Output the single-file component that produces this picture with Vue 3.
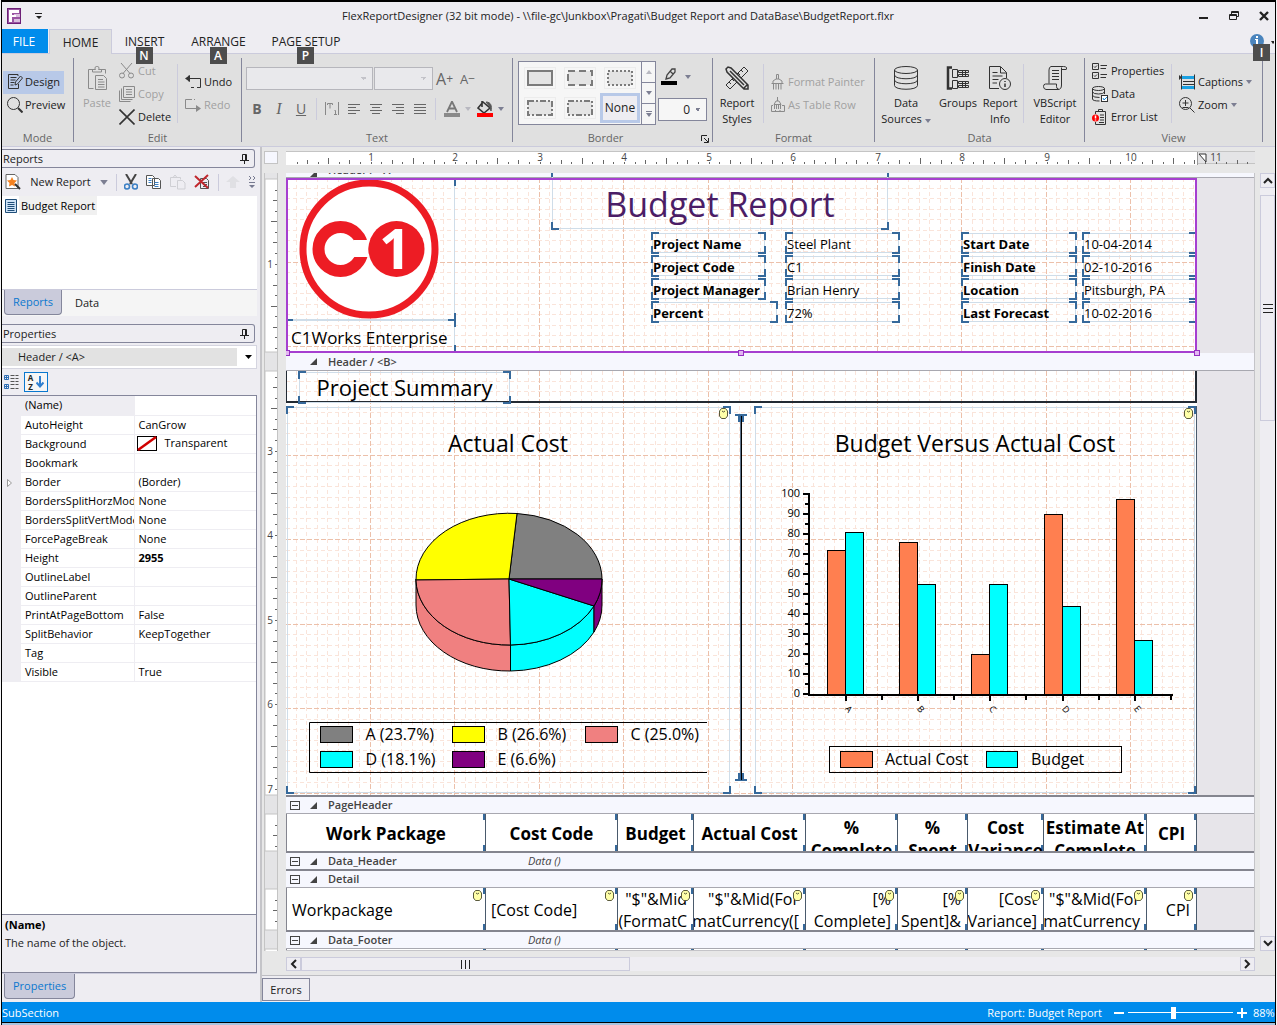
<template>
  <div class="window">
    <header class="titlebar">
      <svg class="app-icon" width="14" height="16" viewBox="0 0 14 16">
        <rect width="14" height="16" fill="#6d2077" />
        <rect x="1" y="1" width="12" height="14" fill="#9a55a3" />
        <rect x="7" y="6" width="6" height="3" fill="#d9bfdd" />
        <rect x="7" y="11" width="6" height="3" fill="#d9bfdd" />
        <path d="M2 2h10v3H5v2h4v2H5v5H2z" fill="#fff" />
      </svg>
      <button class="quick" aria-label="Customize">
        <svg width="8" height="6" viewBox="0 0 8 6"><path d="M0 0h7v1H0zM1 3h6L4 6z" fill="#222" /></svg>
      </button>
      <h1 class="window-title">{{ title }}</h1>
      <div class="window-buttons">
        <button aria-label="Minimize">
          <svg width="10" height="10" viewBox="0 0 10 10"><path d="M0 6h9v2H0z" fill="#222" /></svg>
        </button>
        <button aria-label="Restore">
          <svg width="10" height="10" viewBox="0 0 10 10"><path d="M2.500 3V.5h7v5H8M.5 3.500h7v5h-7zM.5 4.500h7M2.500 1.500h7" fill="none" stroke="#222" /></svg>
        </button>
        <button aria-label="Close">
          <svg width="10" height="10" viewBox="0 0 10 10"><path d="M1 1l8 8M9 1l-8 8" stroke="#222" stroke-width="2.400" /></svg>
        </button>
      </div>
    </header>

    <nav class="tabs">
      <button class="tab file">FILE</button>
      <button class="tab active">HOME</button>
      <button v-for="tab in tabs" :key="tab.name" class="tab" :class="tab.cls">
        {{ tab.name }}<span class="keytip">{{ tab.key }}</span>
      </button>
      <button class="info" aria-label="Info">
        <svg width="24" height="14" viewBox="0 0 24 14">
          <circle cx="7" cy="7" r="7" fill="#4a84bd" />
          <path d="M6 2h2v2H6zM5 5h3v6H6V6H5z" fill="#fff" />
          <path d="M21 7h5l-3 3z" fill="#222" />
        </svg>
        <span class="keytip">I</span>
      </button>
    </nav>

    <section class="ribbon">
      <div class="group g-mode">
        <div class="group-body">
          <div class="stack">
            <button class="tool on">
              <svg width="16" height="16" viewBox="0 0 16 16" class="ic"><path d="M11 2V.5H1.500v14H11.500V10M3.500 3.500h6M3.500 6h5M3.500 8.500h4M3.500 11h3M8 11l.5-3 5-6 2 2-5 6z" /></svg>Design
            </button>
            <button class="tool">
              <svg width="16" height="16" viewBox="0 0 16 16" class="ic"><circle cx="6.500" cy="6.500" r="6" /><path d="M11 11l4.500 4.500" stroke-width="2" /></svg>Preview
            </button>
          </div>
        </div>
        <div class="group-label">Mode</div>
      </div>

      <div class="group g-edit">
        <div class="group-body">
          <button class="big off w-paste">
            <svg width="24" height="24" viewBox="0 0 24 24" class="ic"><path d="M8 3.500H3.500v19h5M16 3.500h4.500v4M7.500 6V3.500h3a2 2 0 1 1 3 0h3V6zM10.500 9.500h8l3 3v11h-11zM13 13.500h5M13 16h6.500M13 18.500h6.500M13 21h6.500" /></svg>
            <span>Paste</span>
          </button>
          <div class="stack w-cut">
            <button class="tool off">
              <svg width="16" height="16" viewBox="0 0 16 16" class="ic"><circle cx="3" cy="12.500" r="2.500" /><circle cx="12" cy="12.500" r="2.500" /><path d="M2 0l9 10.500M13 0L4 10.500" /></svg>Cut
            </button>
            <button class="tool off">
              <svg width="16" height="16" viewBox="0 0 16 16" class="ic"><path d="M4.500.5h11v11h-11zM2.500 2.500v11h11M.5 4.500v11h11M7 3.500h6M7 6h6M7 8.500h6" /></svg>Copy
            </button>
            <button class="tool">
              <svg width="16" height="16" viewBox="0 0 16 16" class="ic"><path d="M.5.5l15 15M15.500.5l-15 15" stroke-width="1.600" /></svg>Delete
            </button>
          </div>
          <i class="rule"></i>
          <div class="stack">
            <button class="tool">
              <svg width="16" height="16" viewBox="0 0 16 16" class="ic"><path d="M2 4.500h13.500v9H12M9 13.500H6M4 1.500v6" /><path d="M5 1v7L0 4.500z" class="solid" /></svg>Undo
            </button>
            <button class="tool off">
              <svg width="16" height="16" viewBox="0 0 16 16" class="ic"><path d="M7 2.500H.5v9H12M10 2.500h-1" /><path d="M11 8v7l5-3.500z" class="solid" /></svg>Redo
            </button>
          </div>
        </div>
        <div class="group-label">Edit</div>
      </div>

      <div class="group g-text">
        <div class="group-body column">
          <div class="line">
            <select class="combo font-name" aria-label="Font name" disabled></select>
            <select class="combo font-size" aria-label="Font size" disabled></select>
            <button class="glyph big-a" aria-label="Grow font">A<sup>+</sup></button>
            <button class="glyph small-a" aria-label="Shrink font">A<sup>−</sup></button>
          </div>
          <div class="line line-2">
            <button class="glyph"><b>B</b></button>
            <button class="glyph"><i class="serif">I</i></button>
            <button class="glyph"><u>U</u></button>
            <i class="rule short"></i>
            <button class="glyph" aria-label="Text direction">
              <svg width="14" height="14" viewBox="0 0 14 14" fill="none" stroke="#888"><path d="M.5 0v13M13.500 0v13M2.500 3V1.500h5V3M5 1.500v5M9.500 8.500h1v4M9 12.500h3" /></svg>
            </button>
            <button v-for="a in aligns" :key="a.name" class="glyph" :aria-label="a.name">
              <svg width="14" height="12" viewBox="0 0 14 12"><path :d="a.d" stroke="#666" /></svg>
            </button>
            <i class="rule short"></i>
            <button class="glyph" aria-label="Font color">
              <svg width="16" height="16" viewBox="0 0 16 16"><path d="M3 11L8 .5 13 11M5 7.500h6" fill="none" stroke="#777" stroke-width="1.800" /><rect y="12" width="16" height="4" fill="#8a8a8a" /></svg>
            </button>
            <svg class="caret faint" width="6" height="4" viewBox="0 0 6 4"><path d="M0 0h6L3 4z" /></svg>
            <button class="glyph" aria-label="Fill color">
              <svg width="16" height="16" viewBox="0 0 16 16"><path d="M6 1l7 6-6 5-6-5zM5 0v6" fill="#ddd" stroke="#333" stroke-width="1.600" /><path d="M9 1c5 0 6 4 5 9l-1-4z" fill="#555" stroke="#555" /><rect y="12" width="16" height="4" fill="#f00" /></svg>
            </button>
            <svg class="caret" width="6" height="4" viewBox="0 0 6 4"><path d="M0 0h6L3 4z" /></svg>
          </div>
        </div>
        <div class="group-label">Text</div>
      </div>

      <div class="group g-border">
        <div class="group-body">
          <div class="gallery">
            <div class="gallery-items">
              <button v-for="b in borders" :key="b.name" class="swatch" :aria-label="b.name">
                <svg width="26" height="16" viewBox="0 0 26 16"><rect x="1" y="1" width="24" height="14" fill="#e4e4e4" stroke="#7b7b7b" stroke-width="2" :stroke-dasharray="b.dash" /></svg>
              </button>
              <button class="swatch none">None</button>
            </div>
            <div class="gallery-scroll">
              <button aria-label="Scroll up"><svg class="caret faint" width="6" height="4" viewBox="0 0 6 4"><path d="M0 4h6L3 0z" /></svg></button>
              <button aria-label="Scroll down"><svg class="caret" width="6" height="4" viewBox="0 0 6 4"><path d="M0 0h6L3 4z" /></svg></button>
              <button aria-label="More borders"><svg class="caret" width="6" height="6" viewBox="0 0 6 6"><path d="M0 0h6v1H0zM0 2h6L3 6z" /></svg></button>
            </div>
          </div>
          <div class="pen-column">
            <button class="pen" aria-label="Border color">
              <svg width="16" height="17" viewBox="0 0 16 17"><path d="M5 11l1-4 5-6h3v3l-5 6zM9 3l3 3" fill="none" stroke="#444" stroke-width="1.300" /><rect y="13" width="16" height="4" /></svg>
              <svg class="caret" width="6" height="4" viewBox="0 0 6 4"><path d="M0 0h6L3 4z" /></svg>
            </button>
            <select class="combo weight" aria-label="Border width"><option>0</option></select>
          </div>
        </div>
        <div class="group-label with-launcher">Border
          <svg class="launcher" width="8" height="8" viewBox="0 0 8 8"><path d="M.5 6V.5H6M3 3l4 4M7.500 3v4.500H3" fill="none" stroke="#222" /></svg>
        </div>
      </div>

      <div class="group g-format">
        <div class="group-body">
          <button class="big w-styles">
            <svg width="24" height="24" viewBox="0 0 24 24" class="ic"><path d="M19 1l4 4L5 23l-4-4zM16 4l2 2M13 7l2 2M10 10l2 2M7 13l2 2M4 16l2 2" /><path d="M1 3l2-2 3 1 17 17v4h-4L2 6zM5 5l14 14M19 22l3-3" fill="#e0e0e0" stroke-width="1.500" /></svg>
            <span>Report<br />Styles</span>
          </button>
          <i class="rule"></i>
          <div class="stack">
            <button class="tool off">
              <svg width="14" height="16" viewBox="0 0 14 16" class="ic"><path d="M5.500 5V.5h2V5M2 9.500V7l3-2h3l3 2v2.500zM.5 9.500h12M2.500 10v5.500M5 10v5.500M7.500 10v5.500M10 10v5.500" /></svg>Format Painter
            </button>
            <button class="tool off">
              <svg width="14" height="16" viewBox="0 0 14 16" class="ic"><path d="M6.500 0v4M3 7.500L5 4h3l2 3.500zM3.500 8v4M5.500 8v4M7.500 8v4M9.500 8v4M2 8.500H.5v6h13v-6H11M4.500 13v2M9 13v2" /></svg>As Table Row
            </button>
          </div>
        </div>
        <div class="group-label">Format</div>
      </div>

      <div class="group g-data">
        <div class="group-body">
          <button class="big w-sources">
            <svg width="24" height="24" viewBox="0 0 24 24" class="ic"><ellipse cx="12" cy="4" rx="11.500" ry="3.500" /><path d="M.5 4v15.500c0 5 23 5 23 0V4M.5 9c0 5 23 5 23 0M.5 14c0 5 23 5 23 0" /></svg>
            <span>Data<br />Sources <svg class="caret" width="6" height="4" viewBox="0 0 6 4"><path d="M0 0h6L3 4z" /></svg></span>
          </button>
          <button class="big w-groups">
            <svg width="24" height="24" viewBox="0 0 24 24" class="ic"><path d="M6 1.500H2v21h4" stroke-width="2.500" /><path d="M6.500 3.500h5v8h-5zM6.500 14.500h5v8h-5zM12.500 4.500h10v2h-10zM12.500 8.500h10v2h-10zM12.500 15.500h10v2h-10zM12.500 19.500h10v2h-10zM16.500 4v6M19.500 4v6M16.500 15v6M19.500 15v6" /></svg>
            <span>Groups</span>
          </button>
          <button class="big w-info">
            <svg width="24" height="24" viewBox="0 0 24 24" class="ic"><path d="M11 22.500H1.500V.5h11l6 6V12M12.500 1v6h6M4.500 6.500h5M4.500 10h10M4.500 13.500h6M4.500 17h4.500" /><circle cx="17" cy="18" r="5.500" /><path d="M17 15v1M17 17.500V21" stroke-width="1.500" /></svg>
            <span>Report<br />Info</span>
          </button>
          <i class="rule"></i>
          <button class="big w-script">
            <svg width="24" height="24" viewBox="0 0 24 24" class="ic"><path d="M23.500 3.500V1.500q-1-1-3-1H8Q6 1 6 4v13.500M23 3.500h-4.500v-2M18.500 3v16q0 4.500-3.500 4.500H3q-2.500-.5-2.500-3t2-2.500h11v2.500q0 2.500 2 2.500M9 4.500h7M9 7.500h7M9 10.500h7M9 13.500h7" /></svg>
            <span>VBScript<br />Editor</span>
          </button>
        </div>
        <div class="group-label">Data</div>
      </div>

      <div class="group g-view">
        <div class="group-body">
          <div class="stack w-view">
            <button class="tool">
              <svg width="16" height="16" viewBox="0 0 16 16" class="ic"><path d="M.5.5h6v6h-6zM.5 9.500h6v6h-6zM2 3.500l1 1 2-2M2 12.500l1 1 2-2M8.500 2.500H15M8.500 5.500H14M8.500 11.500H15M8.500 14.500H14" /></svg>Properties
            </button>
            <button class="tool">
              <svg width="16" height="16" viewBox="0 0 16 16" class="ic"><ellipse cx="6.500" cy="2.500" rx="6" ry="2" /><path d="M.5 2.500v10.500q0 2 7 2M12.500 2.500V8M.5 6q1 2 6 2t6-2M.5 9.500q1 2 7 2" /><rect x="9.500" y="9.500" width="6" height="6" fill="#fff" /><path d="M11 12l1 2 3-3" stroke="#1b87d6" /></svg>Data
            </button>
            <button class="tool">
              <svg width="16" height="16" viewBox="0 0 16 16" class="ic"><path d="M3.500 5V2.500h10v13h-10V13M6.500 2V.5h4V2M8 6h4M8 8.500h4M8 11h4M7 13.500h5" /><circle cx="3.500" cy="9" r="3.500" fill="#f00" stroke="none" /><path d="M3.500 6.500V9.500M3.500 10.500v1" stroke="#fff" stroke-width="1.500" /></svg>Error List
            </button>
          </div>
          <i class="rule"></i>
          <div class="stack">
            <button class="tool">
              <svg width="16" height="16" viewBox="0 0 16 16" class="ic"><path d="M2.500.5v15M15.500.5v15M4 7.500h11M4 10.500h11" /><path d="M0 1v5l3-2.500z" class="solid" /><path d="M3 3.500h12M3 13.500h12" stroke="#1ba1e2" stroke-width="3" /></svg>Captions
              <svg class="caret" width="6" height="4" viewBox="0 0 6 4"><path d="M0 0h6L3 4z" /></svg>
            </button>
            <button class="tool">
              <svg width="16" height="16" viewBox="0 0 16 16" class="ic"><circle cx="6.500" cy="6.500" r="6" /><path d="M11 11l4.500 4.500M3.500 6h6M6.500 3v6M3.500 10.500h6" /></svg>Zoom
              <svg class="caret" width="6" height="4" viewBox="0 0 6 4"><path d="M0 0h6L3 4z" /></svg>
            </button>
          </div>
        </div>
        <div class="group-label">View</div>
      </div>
    </section>

    <main class="body">
      <aside class="side">
        <h2 class="panel-head">Reports <svg width="9" height="10" viewBox="0 0 9 10"><path d="M2.500 6V.5h4V6M0 6.500h9M4.500 7v3M5.500 1v5" fill="none" stroke="#222" /></svg></h2>
        <div class="panel-tools">
          <svg width="16" height="16" viewBox="0 0 16 16"><path d="M1 .5h9l3 3v11H1z" fill="#fff" stroke="#666" /><path d="M7 3l1.500 3 3.500.5-2.500 2.500.5 3.500-3-1.500-3 1.500.5-3.500L2 6.500 5.500 6z" fill="#f58220" /><path d="M10 10l5 5" stroke="#333" stroke-width="2" /></svg>
          <button class="new-report">New Report</button>
          <svg class="menu-caret" width="8" height="5" viewBox="0 0 6 4"><path d="M0 0h6L3 4z" /></svg>
          <i class="rule side-rule"></i>
          <button aria-label="Cut"><svg width="14" height="16" viewBox="0 0 14 16"><path d="M2 0l6 10M12 0L6 10" stroke="#444" stroke-width="2" /><circle cx="3" cy="12.500" r="2.500" fill="none" stroke="#3b7fc4" stroke-width="1.600" /><circle cx="11" cy="12.500" r="2.500" fill="none" stroke="#3b7fc4" stroke-width="1.600" /></svg></button>
          <button aria-label="Copy"><svg width="16" height="16" viewBox="0 0 16 16" fill="#fff" stroke="#555"><path d="M.5 1.500h6l2 2v8h-8zM6.500 4.500h6l2 2v8h-8z" /><path d="M2.500 4.500h3M2.500 6.500h3M2.500 8.500h3M8.500 8.500h4M8.500 10.500h4M8.500 12.500h4" stroke="#3b7fc4" /></svg></button>
          <button aria-label="Paste"><svg width="16" height="16" viewBox="0 0 16 16" fill="none" stroke="#cfcfd4"><path d="M6 12.500H.5v-9h10v2M3 3.500L5 1l2 2.500M7.500 6.500h5l2.500 2.500v6H7.500z" /></svg></button>
          <button aria-label="Delete"><svg width="16" height="16" viewBox="0 0 16 16"><path d="M6.500 4.500h6l2 2v8h-8zM9 8.500h4M9 10.500h4M9 12.500h4" fill="none" stroke="#555" /><path d="M1 2l13 12M14 1L1 13" stroke="#c0272d" stroke-width="2" /></svg></button>
          <i class="rule side-rule"></i>
          <button aria-label="Move up"><svg width="14" height="12" viewBox="0 0 14 12"><path d="M7 0l7 6h-4v6H4V6H0z" fill="#e0e0e4" /></svg></button>
          <svg width="8" height="12" viewBox="0 0 8 12"><path d="M1 0l2 2-2 2M5 0l2 2-2 2" fill="none" stroke="#777a90" /><path d="M1 6h6v1H1zM1 9h6l-3 3z" fill="#777a90" /></svg>
        </div>
        <ul class="report-list">
          <li>
            <svg width="12" height="14" viewBox="0 0 12 14"><path d="M.5.500h11v13H.5z" fill="#cfe3f7" stroke="#1f4e79" /><path d="M2.500 3.500h7M2.500 5.500h7M2.500 7.500h7M2.500 9.500h7M2.500 11.500h7" stroke="#1f4e79" /></svg>
            <span>Budget Report</span>
          </li>
        </ul>
        <div class="dock-tabs">
          <button class="dock-tab active">Reports</button>
          <button class="dock-tab">Data</button>
        </div>

        <h2 class="panel-head second">Properties <svg width="9" height="10" viewBox="0 0 9 10"><path d="M2.500 6V.5h4V6M0 6.500h9M4.500 7v3M5.500 1v5" fill="none" stroke="#222" /></svg></h2>
        <div class="object-picker">
          <select aria-label="Object"><option>Header / &lt;A&gt;</option></select>
          <svg width="7" height="4" viewBox="0 0 7 4"><path d="M0 0h7L3.500 4z" /></svg>
        </div>
        <div class="sort-tools">
          <button aria-label="Categorized"><svg width="15" height="15" viewBox="0 0 15 15"><path d="M.5.5h4v4h-4zM.5 9.500h4v4h-4zM1 2.500h3M2.500 1v3M1 11.500h3M2.500 10v3" fill="none" stroke="#2f6fb5" /><path d="M6.500.5h8M6.500 3.500h8M6.500 6.500h8M6.500 9.500h8M6.500 13.500h8" stroke="#555" stroke-dasharray="4 1 3 9" /></svg></button>
          <button class="on" aria-label="Alphabetical"><span>A<br />Z</span><svg width="8" height="12" viewBox="0 0 8 12"><path d="M4 0v10M.5 6.500L4 10.500l3.500-4" fill="none" stroke="#2f7fd0" stroke-width="2" /></svg></button>
        </div>
        <div class="props-area">
          <table class="props">
            <tbody>
              <tr v-for="p in properties" :key="p.name" :class="{ current: p.name === '(Name)' }">
                <td class="gutter"><svg v-if="p.expand" width="6" height="8" viewBox="0 0 6 8"><path d="M.5.500v7l4-3.500z" fill="#fff" stroke="#999" /></svg></td>
                <th>{{ p.name }}</th>
                <td :class="{ strong: p.strong }">
                  <svg v-if="p.swatch" width="20" height="15" viewBox="0 0 20 15"><rect x=".5" y=".5" width="19" height="14" fill="#fff" stroke="#000" /><path d="M1 14L19 1" stroke="#d00000" stroke-width="2.500" /></svg>{{ p.value }}
                </td>
              </tr>
            </tbody>
          </table>
        </div>
        <div class="describe">
          <strong>(Name)</strong>
          <p>The name of the object.</p>
        </div>
        <div class="dock-tabs bottom">
          <button class="dock-tab active">Properties</button>
        </div>
      </aside>

      <div class="work">
        <div class="designer">
          <div class="corner"></div>
          <svg class="ruler-h" height="13">
            <rect width="911" height="13" fill="#fff" />
            <path d="M911.500 0v13" stroke="#999" />
            <path d="M913 2h7v8z" fill="#fff" stroke="#333" />
            <path v-for="t in hTicks" :key="t.x" :d="`M${t.x} ${12 - t.len}v${t.len}`" stroke="#666" />
            <text v-for="n in 11" :key="n" :x="Math.round(n * inch)" y="9">{{ n }}</text>
          </svg>
          <svg class="ruler-v" width="14">
            <g v-for="s in vSegments" :key="s.from">
              <rect x="0" :y="s.from" width="14" :height="s.to - s.from" fill="#fff" stroke="#c4c4c4" />
              <path v-for="t in s.ticks" :key="t.y" :d="`M${12 - t.len} ${t.y}h${t.len}`" stroke="#666" />
              <text v-for="t in s.labels" :key="t.n" x="5" :y="t.y + 4">{{ t.n }}</text>
            </g>
          </svg>

          <div class="canvas">
            <div class="strip first"><i class="tri"></i><b>Header / &lt;A&gt;</b></div>
            <div class="band band-a">
              <div class="page selected">
                <svg class="grid" width="911" height="174"><path :d="grid(911, 174).minor" class="minor" /><path :d="grid(911, 174).major" class="major" /></svg>
                <svg class="logo" width="140" height="140" viewBox="0 0 140 140">
                  <circle cx="70" cy="70" r="66" fill="#fff" stroke="#ed1c24" stroke-width="7" />
                  <circle cx="41.500" cy="70" r="22" fill="none" stroke="#ed1c24" stroke-width="12" />
                  <rect x="55" y="61" width="14" height="17" fill="#fff" />
                  <circle cx="97.500" cy="70" r="28" fill="#ed1c24" />
                  <text x="96" y="90" text-anchor="middle" font-size="56" font-weight="700" fill="#fff">1</text>
                </svg>
                <div class="field f-logo"></div>
                <div class="field f-company">C1Works Enterprise</div>
                <div class="field f-title">Budget Report</div>
                <div class="facts facts-1">
                  <template v-for="f in facts1" :key="f[0]">
                    <div class="field key" :class="{ wide: f[0] === 'Percent' }">{{ f[0] }}</div>
                    <div class="field">{{ f[1] }}</div>
                  </template>
                </div>
                <div class="facts facts-2">
                  <template v-for="f in facts2" :key="f[0]">
                    <div class="field key">{{ f[0] }}</div>
                    <div class="field">{{ f[1] }}</div>
                  </template>
                </div>
                <i class="frame"></i>
                <i class="handle h-left"></i><i class="handle h-mid"></i><i class="handle h-right"></i>
              </div>
            </div>

            <div class="strip"><i class="tri"></i><b>Header / &lt;B&gt;</b></div>
            <div class="band band-b">
              <div class="page">
                <svg class="grid" width="911" height="424"><path :d="grid(911, 424).minor" class="minor" /><path :d="grid(911, 424).major" class="major" /></svg>
                <div class="summary-box"></div>
                <div class="field f-summary">Project Summary</div>
                <div class="field f-pie"><svg class="db" width="9" height="11" viewBox="0 0 9 11"><path d="M.5 3l2-2.500h4l2 2.500v5l-2 2.500h-4l-2-2.500z" fill="#ffffa8" stroke="#5a5a3c" /><path d="M3 3l1.500 1L6 3" fill="none" stroke="#5a5a3c" /></svg></div>
                <div class="field f-bars"><svg class="db" width="9" height="11" viewBox="0 0 9 11"><path d="M.5 3l2-2.500h4l2 2.500v5l-2 2.500h-4l-2-2.500z" fill="#ffffa8" stroke="#5a5a3c" /><path d="M3 3l1.500 1L6 3" fill="none" stroke="#5a5a3c" /></svg></div>
                <svg class="divider" width="14" height="368" viewBox="0 0 14 368"><path d="M1 1h12M1 366h12" stroke="#36699b" stroke-width="2" /><path d="M7 2v6M7 359v7" stroke="#36699b" stroke-width="6" /><path d="M7 8v351" stroke="#5b7088" stroke-width="2" /><path d="M7.500 2v364" stroke="#000" /></svg>

                <svg class="pie" width="440" height="386" viewBox="0 0 440 386">
                  <text x="222" y="44" text-anchor="middle" class="chart-title">Actual Cost</text>
                  <g stroke="#000" stroke-width="1">
                    <path d="M130 171v26A93 66 0 0 0 224.500 263v-26A93 66 0 0 1 130 171z" fill="#f08080" />
                    <path d="M224.500 237v26A93 66 0 0 0 308 224v-26A93 66 0 0 1 224.500 237z" fill="#0ff" />
                    <path d="M308 198v26A93 66 0 0 0 316 197v-26A93 66 0 0 1 308 198z" fill="#800080" />
                    <path d="M223 171H316A93 66 0 0 0 231 105.500z" fill="#808080" />
                    <path d="M223 171L231 105.500A93 66 0 0 0 130 172z" fill="#ff0" />
                    <path d="M223 171L130 172A93 66 0 0 0 224.500 237z" fill="#f08080" />
                    <path d="M223 171L224.500 237A93 66 0 0 0 308 198z" fill="#0ff" />
                    <path d="M223 171L308 198A93 66 0 0 0 316 171z" fill="#800080" />
                  </g>
                  <path d="M421 314.500H23.500v50H421" fill="none" stroke="#000" />
                  <g v-for="l in pieLegend" :key="l.text">
                    <rect :x="l.x" :y="l.y" width="32" height="16" :fill="l.color" stroke="#000" />
                    <text :x="l.x + 45" :y="l.y + 13" class="legend">{{ l.text }}</text>
                  </g>
                </svg>

                <svg class="bars" width="442" height="386" viewBox="0 0 442 386">
                  <text x="220" y="44" text-anchor="middle" class="chart-title">Budget Versus Actual Cost</text>
                  <g v-for="(b, i) in bars" :key="b.name" stroke="#000">
                    <rect :x="barX[i]" :y="286.5 - b.actual * 2" width="18" :height="b.actual * 2" fill="#ff7f50" />
                    <rect :x="barX[i] + 18" :y="286.5 - b.budget * 2" width="18" :height="b.budget * 2" fill="#0ff" />
                    <path :d="`M${barX[i] + 18.5} 287v6M${barX[i] + 54.5} 287v5`" stroke-width="2" />
                    <text :transform="`translate(${barX[i] + 17} 301) rotate(50)`" class="axis slant">{{ b.name }}</text>
                  </g>
                  <path d="M54 85v202h364" fill="none" stroke="#000" stroke-width="2" />
                  <g v-for="n in 11" :key="n">
                    <path :d="`M48 ${306 - n * 20}h6`" stroke="#000" stroke-width="2" />
                    <path v-if="n < 11" :d="`M50 ${296 - n * 20}h4`" stroke="#000" stroke-width="2" />
                    <text x="45" :y="309 - n * 20" text-anchor="end" class="axis">{{ (n - 1) * 10 }}</text>
                  </g>
                  <rect x="74.500" y="338.500" width="292" height="26" fill="none" stroke="#000" />
                  <rect x="85.500" y="343.500" width="32" height="16" fill="#ff7f50" stroke="#000" />
                  <text x="130" y="357" class="legend">Actual Cost</text>
                  <rect x="231.500" y="343.500" width="31" height="16" fill="#0ff" stroke="#000" />
                  <text x="276" y="357" class="legend">Budget</text>
                </svg>
              </div>
            </div>

            <div class="strip dark"><i class="minus"></i><i class="tri"></i><b>PageHeader</b></div>
            <div class="band head">
              <div class="page columns">
                <div v-for="c in columns" :key="c.head" class="cell" :class="{ tall: c.head.includes('\n') }"><span>{{ c.head }}</span></div>
              </div>
            </div>
            <div class="strip dark empty"><i class="minus"></i><i class="tri"></i><b>Data_Header</b><em>Data ()</em></div>
            <div class="strip dark"><i class="minus"></i><i class="tri"></i><b>Detail</b></div>
            <div class="band detail">
              <div class="page columns">
                <div v-for="c in columns" :key="c.head" class="cell" :class="c.align">
                  <span>{{ c.cell }}</span>
                  <svg class="db" width="9" height="11" viewBox="0 0 9 11"><path d="M.5 3l2-2.500h4l2 2.500v5l-2 2.500h-4l-2-2.500z" fill="#ffffa8" stroke="#5a5a3c" /><path d="M3 3l1.500 1L6 3" fill="none" stroke="#5a5a3c" /></svg>
                </div>
              </div>
            </div>
            <div class="strip dark"><i class="minus"></i><i class="tri"></i><b>Data_Footer</b><em>Data ()</em></div>
            <div class="band footer">
              <div class="page columns"><div v-for="c in columns" :key="c.head" class="cell"></div></div>
            </div>
          </div>

          <div class="scroll-v">
            <button aria-label="Scroll up"><svg width="10" height="7" viewBox="0 0 10 7"><path d="M1 6l4-4 4 4" /></svg></button>
            <div class="thumb"><svg width="10" height="10" viewBox="0 0 10 10"><path d="M0 1.500h10M0 5.500h10M0 9.500h10" /></svg></div>
            <button aria-label="Scroll down"><svg width="10" height="7" viewBox="0 0 10 7"><path d="M1 1l4 4 4-4" /></svg></button>
          </div>
          <div class="scroll-h">
            <button aria-label="Scroll left"><svg width="7" height="10" viewBox="0 0 7 10"><path d="M6 1L2 5l4 4" /></svg></button>
            <div class="thumb"><svg width="10" height="9" viewBox="0 0 10 9"><path d="M.5 0v9M4.500 0v9M8.500 0v9" /></svg></div>
            <button aria-label="Scroll right"><svg width="7" height="10" viewBox="0 0 7 10"><path d="M1 1l4 4-4 4" /></svg></button>
          </div>
        </div>
        <div class="errors-bar"><button class="errors">Errors</button></div>
      </div>
    </main>

    <footer class="status">
      <span class="status-left">SubSection</span>
      <span>Report: Budget Report</span>
      <button aria-label="Zoom out"><svg width="10" height="10" viewBox="0 0 10 10"><path d="M0 5h10" stroke="#fff" stroke-width="2" /></svg></button>
      <input v-model="zoom" type="range" min="10" max="190" aria-label="Zoom" />
      <button aria-label="Zoom in"><svg width="10" height="10" viewBox="0 0 10 10"><path d="M0 5h10M5 0v10" stroke="#fff" stroke-width="2" /></svg></button>
      <span class="percent">{{ zoom }}%</span>
    </footer>
    <div class="edge"></div>
  </div>
</template>

<script setup>
import { ref } from 'vue'

const title = 'FlexReportDesigner (32 bit mode) - \\\\file-gc\\Junkbox\\Pragati\\Budget Report and DataBase\\BudgetReport.flxr'
const zoom = ref(88)

const tabs = [
  { name: 'INSERT', key: 'N', cls: 't-insert' },
  { name: 'ARRANGE', key: 'A', cls: 't-arrange' },
  { name: 'PAGE SETUP', key: 'P', cls: 't-page' }
]

const aligns = [
  { name: 'Align left', d: 'M1 1.5h12M1 4.5h8M1 7.5h12M1 10.5h8' },
  { name: 'Align center', d: 'M1 1.5h12M3 4.5h8M1 7.5h12M3 10.5h8' },
  { name: 'Align right', d: 'M1 1.5h12M5 4.5h8M1 7.5h12M5 10.5h8' },
  { name: 'Justify', d: 'M1 1.5h12M1 4.5h12M1 7.5h12M1 10.5h12' }
]

const borders = [
  { name: 'Solid', dash: 'none' },
  { name: 'Dash', dash: '7 4' },
  { name: 'Dot', dash: '2 2' },
  { name: 'Dash dot', dash: '6 2 2 2' },
  { name: 'Dash dot dot', dash: '6 2 2 2 2 2' }
]

const properties = [
  { name: '(Name)', value: '' },
  { name: 'AutoHeight', value: 'CanGrow' },
  { name: 'Background', value: 'Transparent', swatch: true },
  { name: 'Bookmark', value: '' },
  { name: 'Border', value: '(Border)', expand: true },
  { name: 'BordersSplitHorzMode', value: 'None' },
  { name: 'BordersSplitVertMode', value: 'None' },
  { name: 'ForcePageBreak', value: 'None' },
  { name: 'Height', value: '2955', strong: true },
  { name: 'OutlineLabel', value: '' },
  { name: 'OutlineParent', value: '' },
  { name: 'PrintAtPageBottom', value: 'False' },
  { name: 'SplitBehavior', value: 'KeepTogether' },
  { name: 'Tag', value: '' },
  { name: 'Visible', value: 'True' }
]

const facts1 = [
  ['Project Name', 'Steel Plant'],
  ['Project Code', 'C1'],
  ['Project Manager', 'Brian Henry'],
  ['Percent', '72%']
]
const facts2 = [
  ['Start Date', '10-04-2014'],
  ['Finish Date', '02-10-2016'],
  ['Location', 'Pitsburgh, PA'],
  ['Last Forecast', '10-02-2016']
]

const pieLegend = [
  { text: 'A (23.7%)', color: '#808080', x: 34.5, y: 318.5 },
  { text: 'B (26.6%)', color: '#ffff00', x: 166.5, y: 318.5 },
  { text: 'C (25.0%)', color: '#f08080', x: 299.5, y: 318.5 },
  { text: 'D (18.1%)', color: '#00ffff', x: 34.5, y: 343.5 },
  { text: 'E (6.6%)', color: '#800080', x: 166.5, y: 343.5 }
]

const bars = [
  { name: 'A', actual: 72, budget: 81 },
  { name: 'B', actual: 76, budget: 55 },
  { name: 'C', actual: 20, budget: 55 },
  { name: 'D', actual: 90, budget: 44 },
  { name: 'E', actual: 97.5, budget: 27 }
]
const barX = [72.5, 144.5, 216.5, 289.5, 361.5]

const columns = [
  { head: 'Work Package', cell: 'Workpackage', align: 'left' },
  { head: 'Cost Code', cell: '[Cost Code]', align: 'left' },
  { head: 'Budget', cell: '"$"&Mid\n(FormatC', align: 'right' },
  { head: 'Actual Cost', cell: '"$"&Mid(For\nmatCurrency([', align: 'right' },
  { head: '%\nComplete', cell: '[%\nComplete]', align: 'right' },
  { head: '%\nSpent', cell: '[%\nSpent]&', align: 'right' },
  { head: 'Cost\nVariance', cell: '[Cost\nVariance]', align: 'right' },
  { head: 'Estimate At\nComplete', cell: '"$"&Mid(For\nmatCurrency', align: 'right' },
  { head: 'CPI', cell: 'CPI', align: 'right' }
]

// one report inch on screen at the current zoom
const inch = 84.5
const step = inch / 8

const tickLength = (n) => (n % 8 === 0 ? 2 : n % 4 === 0 ? 6 : n % 2 === 0 ? 4 : 2)

const hTicks = Array.from({ length: 91 }, (_, i) => ({
  x: Math.round((i + 1) * step) + 0.5,
  len: tickLength(i + 1)
}))

const vSegments = [
  { from: 6, to: 179, origin: 6 },
  { from: 198, to: 622, origin: 24 },
  { from: 641, to: 678, origin: 641 },
  { from: 716, to: 757, origin: 716 },
  { from: 776, to: 790, origin: 776 }
].map((s) => {
  const ticks = []
  const labels = []
  for (let n = 1; n < 60; n++) {
    const y = Math.round(s.origin + n * step)
    if (y <= s.from || y >= s.to) continue
    ticks.push({ y: y + 0.5, len: tickLength(n) })
    if (n % 8 === 0 && y < s.to - 5) labels.push({ n: n / 8, y })
  }
  return { ...s, ticks, labels }
})

function grid(w, h) {
  let minor = ''
  let major = ''
  for (let n = 1; n * step < w; n++) {
    const line = `M${Math.round(n * step) - 0.5} 0V${h}`
    if (n % 8) minor += line
    else major += line
  }
  for (let n = 1; n * step < h; n++) {
    const line = `M0 ${Math.round(n * step) - 0.5}H${w}`
    if (n % 8) minor += line
    else major += line
  }
  return { minor, major }
}
</script>

<style>
body {
  background: #f4f4f6;
}
</style>

<style scoped>
* {
  box-sizing: border-box;
}

.window {
  background: #eeedf2;
  border: 1px solid #000;
  border-bottom: 0;
  border-top-width: 2px;
  color: #222;
  display: flex;
  flex-direction: column;
  font: 11px/16px "Open Sans", "Noto Sans", sans-serif;
  height: 100vh;
  margin: 0 1px;
  overflow: hidden;
}

button {
  align-items: center;
  background: none;
  border: 0;
  color: inherit;
  display: flex;
  font: inherit;
  justify-content: center;
  padding: 0;
  white-space: nowrap;
}

h1,
h2,
p,
ul {
  font: inherit;
  margin: 0;
  padding: 0;
}

svg {
  flex: none;
}

/* title bar and tabs */
.titlebar {
  align-items: center;
  display: flex;
  height: 27px;
  padding: 0 6px 0 5px;
}

.quick {
  margin-left: 14px;
}

.window-title {
  flex: 1;
  padding-right: 6px;
  text-align: center;
}

.window-buttons {
  display: flex;
  gap: 20px;
}

.tabs {
  border-bottom: 1px solid #cbcbdc;
  display: flex;
  flex: none;
  font-size: 12px;
  height: 25px;
}

.tab {
  padding: 1px 14px 0;
  position: relative;
}

.file {
  background: #008cec;
  color: #fff;
  padding-right: 16px;
  width: 46px;
}

.active.tab {
  background: #e0e0e0;
  border: 1px solid #cbcbdc;
  border-bottom: 0;
  margin-bottom: -1px;
  margin-left: 1px;
  width: 63px;
}

.t-insert {
  width: 65px;
}

.t-arrange {
  width: 83px;
}

.t-page {
  width: 92px;
}

.keytip {
  background: #4d4d4d;
  color: #fff;
  font-weight: 600;
  height: 17px;
  left: 50%;
  line-height: 17px;
  margin-left: -9px;
  position: absolute;
  text-align: center;
  top: 18px;
  width: 17px;
  z-index: 1;
}

.info {
  margin-left: auto;
  position: relative;
  width: 26px;
}

.info .keytip {
  left: 13px;
  top: 15px;
}

/* ribbon */
.ribbon {
  background: #e0e0e0;
  border-bottom: 1px solid #cbcbdc;
  display: flex;
  flex: none;
  height: 93px;
  padding: 4px 0;
}

.group {
  border-right: 1px solid #84869b;
  display: flex;
  flex: none;
  flex-direction: column;
  padding-top: 2px;
}

.group-body {
  display: flex;
  flex: none;
  height: 69px;
}

.group-label {
  color: #666;
  flex: none;
  line-height: 18px;
  position: relative;
  text-align: center;
}

.with-launcher {
  padding-right: 14px;
}

.g-mode { width: 72px; }
.g-edit { width: 168px; }
.g-text { width: 271px; }
.g-border { width: 200px; }
.g-format { width: 162px; }
.g-data { width: 210px; }
.g-view { width: 178px; }

.stack {
  display: flex;
  flex-direction: column;
  height: 67px;
  justify-content: center;
}

.tool {
  flex: none;
  gap: 3px;
  height: 23px;
  justify-content: flex-start;
  padding: 0 2px;
}

.tool.on {
  background: #b8c9e8;
}

.g-mode .stack {
  padding-left: 1px;
  width: 62px;
}

.g-mode .tool {
  gap: 2px;
  padding-left: 4px;
}

.ic {
  fill: none;
  stroke: #333;
}

.ic .solid {
  fill: #333;
  stroke: none;
}

.off {
  color: #a0a0a0;
}

.off .ic {
  stroke: #8a8a8a;
}

.off .ic .solid {
  fill: #8a8a8a;
}

.big {
  flex: none;
  flex-direction: column;
  gap: 5px;
  justify-content: flex-start;
  padding-top: 6px;
}

.w-paste { width: 40px; }
.w-cut { width: 58px; }
.w-styles { width: 48px; }
.w-sources { width: 62px; }
.w-groups { width: 42px; }
.w-info { width: 42px; }
.w-script { width: 52px; }
.w-view { width: 79px; }

.w-paste {
  margin-left: 3px;
}

.w-view {
  margin-left: 5px;
}

.rule {
  background: #cbcbdc;
  flex: none;
  margin: 4px 5px 6px 2px;
  width: 1px;
}

.caret,
.menu-caret {
  fill: #7c7e92;
}

.caret.faint {
  fill: #b8b8c0;
}

.column {
  flex-direction: column;
}

.line {
  align-items: center;
  display: flex;
  height: 23px;
  margin: 7px 0 0 4px;
}

.line-2 {
  gap: 8px;
  margin: 7px 0 0 8px;
}

.line-2 .caret {
  margin: 0 -2px 0 -3px;
}

.combo {
  --tone: #b8b8c0;
  appearance: none;
  background:
    linear-gradient(45deg, transparent 50%, var(--tone) 50%) right 8px center / 3px 3px no-repeat,
    linear-gradient(315deg, transparent 50%, var(--tone) 50%) right 5px center / 3px 3px no-repeat,
    #eeedf2;
  border: 1px solid #a5a5ad;
  color: #222;
  font: inherit;
  height: 23px;
  margin: 0;
  padding: 0 18px 0 4px;
}

.font-name {
  margin-right: 1px;
  width: 127px;
}

.font-size {
  width: 59px;
}

.glyph {
  color: #666;
  min-width: 14px;
}

.glyph b {
  font-size: 14px;
}

.glyph u {
  font-size: 14px;
}

.glyph sup {
  font-size: 12px;
  line-height: 8px;
}

.serif {
  font-family: "Liberation Serif", serif;
  font-size: 16px;
}

.big-a {
  font-size: 16px;
  margin-left: 3px;
}

.small-a {
  font-size: 13px;
  margin-left: 7px;
}

.short {
  height: 22px;
  margin: 0;
}

.gallery {
  background: #f6f6f6;
  border: 1px solid #84869b;
  display: flex;
  flex: none;
  height: 64px;
  margin: 1px 0 0 5px;
  width: 138px;
}

.gallery-items {
  display: grid;
  flex: 1;
  grid-template-columns: 40px 40px 40px;
  grid-template-rows: 30px 30px;
  padding: 1px;
}

.swatch svg {
  outline: 1px solid #ececec;
  outline-offset: 2px;
}

.swatch.none {
  background: #eeedf2;
  border: 3px solid #b8c9e8;
  font-size: 12px;
}

.gallery-scroll {
  border-left: 1px solid #84869b;
  display: flex;
  flex-direction: column;
  width: 15px;
}

.gallery-scroll button {
  flex: 1;
}

.gallery-scroll button + button {
  border-top: 1px solid #84869b;
}

.pen-column {
  display: flex;
  flex-direction: column;
  justify-content: space-between;
  margin: 8px 0 8px 2px;
}

.pen {
  gap: 8px;
  justify-content: flex-start;
  padding-left: 3px;
}

.weight {
  --tone: #7c7e92;
  background-color: #f6f6f6;
  border-color: #84869b;
  font-size: 12px;
  padding-right: 16px;
  text-align: right;
  width: 49px;
}

.launcher {
  position: absolute;
  right: 3px;
  top: 6px;
}

/* side panels */
.body {
  display: flex;
  flex: 1;
  min-height: 0;
}

.side {
  display: flex;
  flex: none;
  flex-direction: column;
  padding-top: 2px;
  width: 255px;
}

.panel-head {
  align-items: center;
  border: 1px solid #84869b;
  border-left: 0;
  border-radius: 0 3px 3px 0;
  display: flex;
  flex: none;
  height: 19px;
  justify-content: space-between;
  margin-right: 2px;
  padding-left: 1px;
  padding-right: 5px;
}

.second {
  margin-top: 8px;
}

.panel-tools {
  align-items: center;
  display: flex;
  flex: none;
  gap: 8px;
  height: 28px;
  padding-left: 3px;
}

.new-report {
  width: 63px;
}

.side-rule {
  height: 17px;
  margin: 0 -1px 0 0;
}

.report-list {
  background: #fff;
  flex: none;
  height: 93px;
  list-style: none;
}

.report-list li {
  align-items: center;
  display: flex;
  gap: 2px;
  padding-left: 3px;
}

.report-list span {
  background: #f0f0f0;
  color: #000;
  line-height: 19px;
  padding: 0 2px;
}

.dock-tabs {
  background: #f5f5f5;
  border-top: 1px solid #cbcbdc;
  display: flex;
  flex: none;
  height: 27px;
  padding-left: 2px;
}

.dock-tab {
  height: 25px;
  padding: 0 13px;
}

.dock-tab.active {
  background: #cacbdb;
  border: 1px solid #84869b;
  border-radius: 0 0 4px 4px;
  border-top: 0;
  color: #0a78cf;
  padding: 0 8px;
}

.dock-tabs.bottom {
  background: none;
  height: 29px;
}

.object-picker {
  align-items: center;
  background: #fff;
  border: 1px solid #d5d5e0;
  border-left: 0;
  display: flex;
  flex: none;
  gap: 8px;
  height: 24px;
  margin-top: 2px;
  padding-right: 4px;
}

.object-picker select {
  appearance: none;
  background: #e2e2e2;
  border: 0;
  color: #222;
  flex: 1;
  font: inherit;
  height: 18px;
  padding: 0 16px;
}

.sort-tools {
  align-items: center;
  display: flex;
  flex: none;
  gap: 5px;
  height: 26px;
  padding-left: 2px;
}

.sort-tools .on {
  background: #f6f6f6;
  border: 1px solid #0a78cf;
  font-size: 8px;
  font-weight: 700;
  gap: 3px;
  height: 20px;
  line-height: 9px;
  width: 24px;
}

.props-area {
  background: #fff;
  border: 1px solid #84869b;
  border-left: 0;
  flex: 1;
  overflow: hidden;
}

.props {
  border-collapse: collapse;
  color: #000;
  line-height: 14px;
  table-layout: fixed;
  width: 100%;
}

.props td,
.props th {
  border-bottom: 1px solid #eeedf2;
  font-weight: 400;
  height: 19px;
  overflow: hidden;
  padding: 0 4px;
  text-align: left;
  white-space: nowrap;
}

.props .gutter {
  background: #eeedf2;
  padding: 0 7px;
  width: 19px;
}

.props th {
  border-right: 1px solid #eeedf2;
  padding: 0 0 0 4px;
  width: 113px;
}

.props .current th {
  background: #eeedf2;
}

.props .strong {
  font-weight: 700;
}

.props td svg {
  display: inline-block;
  margin-left: -2px;
  margin-right: 8px;
  vertical-align: middle;
}

.describe {
  border: 1px solid #84869b;
  border-left: 0;
  border-top: 0;
  flex: none;
  height: 58px;
  line-height: 18px;
  padding: 1px 3px;
}

.describe strong {
  color: #000;
}

/* designer */
.work {
  border-left: 2px solid #c4c4c8;
  display: flex;
  flex: 1;
  flex-direction: column;
  margin-left: 3px;
  min-width: 0;
}

.designer {
  background: #e7e7e7;
  border-bottom: 1px solid #bdbdc2;
  display: grid;
  flex: 1;
  gap: 0;
  grid-template-columns: 14px 8px 1fr 5px 15px;
  grid-template-rows: 13px 9px 1fr 6px 14px;
  min-height: 0;
  padding: 4px 0 4px 2px;
}

.corner {
  background: #f6f7fe;
  border: 1px solid #c4c4c4;
}

.ruler-h {
  background: #e4e4e6;
  border-bottom: 1px solid #c4c4c4;
  border-top: 1px solid #c4c4c4;
  grid-column: 3;
  overflow: visible;
  width: 100%;
}

.ruler-h text,
.ruler-v text {
  fill: #444;
  font-size: 10px;
  text-anchor: middle;
}

.ruler-v {
  background: #e4e4e6;
  border: solid #c4c4c4;
  border-width: 0 1px;
  grid-column: 1;
  grid-row: 3;
  height: 100%;
}

.canvas {
  background: #e7e5ea;
  border: 1px solid #c4c4c8;
  border-left: 0;
  border-top: 0;
  display: flex;
  flex-direction: column;
  grid-column: 3;
  grid-row: 3;
  min-width: 0;
  overflow: hidden;
}

.strip {
  align-items: center;
  background: #f6f7fe;
  border-bottom: 1px solid #a8a8b0;
  color: #444;
  display: flex;
  flex: none;
  height: 18px;
  line-height: 14px;
  padding-left: 4px;
}

.strip b {
  font-weight: 600;
  margin-left: 11px;
  width: 200px;
}

.strip .tri:first-child {
  margin-left: 20px;
}

.strip.dark {
  border-top: 2px solid #84858f;
  height: 19px;
}

.strip.empty {
  border-bottom: 0;
  height: 18px;
}

.strip.first {
  align-items: flex-end;
  height: 5px;
  overflow: hidden;
}

.tri {
  border-bottom: 7px solid #444;
  border-left: 7px solid transparent;
}

.minus {
  background: linear-gradient(#444 0 0) no-repeat center / 6px 1px;
  border: 1px solid #444;
  height: 9px;
  margin-right: 10px;
  width: 10px;
}

.band {
  flex: none;
}

.page {
  background: #fff;
  height: 100%;
  position: relative;
  width: 911px;
}

.band-a {
  height: 175px;
}

.band-b {
  height: 424px;
}

.selected {
  z-index: 1;
}

.frame {
  border: 2px solid #a63fd0;
  inset: 0;
  position: absolute;
}

.handle {
  background: #e3b6f2;
  border: 1px solid #9430c0;
  bottom: -3px;
  height: 6px;
  position: absolute;
  width: 6px;
}

.h-left { left: -2px; }
.h-mid { left: 452px; }
.h-right { right: -3px; }

.grid {
  left: 0;
  position: absolute;
  top: 0;
}

.minor {
  stroke: #fae4da;
  stroke-dasharray: 4 3;
}

.major {
  stroke: #ecc0aa;
  stroke-dasharray: 5 2;
}

/* a report field: faint frame with four corner marks */
.field {
  --c: linear-gradient(#36699b 0 0);
  --f: linear-gradient(#cfdde9 0 0);
  background:
    var(--c) left top / 8px 2px,
    var(--c) left top / 2px 8px,
    var(--c) right top / 8px 2px,
    var(--c) right top / 2px 8px,
    var(--c) left bottom / 8px 2px,
    var(--c) left bottom / 2px 8px,
    var(--c) right bottom / 8px 2px,
    var(--c) right bottom / 2px 8px,
    var(--f) left top 1px / 100% 1px,
    var(--f) left bottom 1px / 100% 1px,
    var(--f) left 1px top / 1px 100%,
    var(--f) right 1px top / 1px 100%;
  background-repeat: no-repeat;
  color: #000;
  white-space: nowrap;
}

.f-logo,
.f-company,
.f-title,
.f-summary,
.f-pie,
.f-bars,
.logo,
.divider,
.pie,
.bars,
.facts {
  position: absolute;
}

.logo {
  left: 13px;
  top: 1px;
}

.f-logo {
  height: 143px;
  left: -1px;
  top: 0;
  width: 171px;
}

.f-company {
  font-size: 17px;
  height: 34px;
  left: -1px;
  line-height: 38px;
  padding-left: 6px;
  top: 141px;
  width: 171px;
}

.f-title {
  color: #4b1d66;
  font-size: 34px;
  height: 61px;
  left: 265px;
  line-height: 71px;
  text-align: center;
  top: -9px;
  width: 338px;
}

.facts {
  display: grid;
  font-size: 13px;
  grid-auto-rows: 22px;
  line-height: 25px;
  row-gap: 1px;
  top: 54px;
}

.facts .field {
  padding-left: 2px;
}

.facts-1 {
  column-gap: 19px;
  grid-template-columns: 115px 115px;
  left: 365px;
}

.facts-2 {
  column-gap: 5px;
  grid-template-columns: 116px 115px;
  left: 675px;
}

.key {
  font-weight: 700;
}

.wide {
  margin-right: -12px;
}

.summary-box {
  border: solid #222a33;
  border-width: 0 2px 2px 1px;
  height: 32px;
  position: relative;
}

.f-summary {
  font-size: 22px;
  height: 33px;
  left: 12px;
  line-height: 32px;
  text-align: center;
  top: 0;
  width: 213px;
}

.f-pie,
.f-bars {
  height: 388px;
  top: 35px;
}

.f-pie {
  left: 0;
  width: 445px;
}

.f-bars {
  border-right: 1px solid #4a5a6c;
  left: 468px;
  width: 443px;
}

.db {
  position: absolute;
  right: 3px;
  top: 2px;
}

.divider {
  left: 448px;
  top: 43px;
}

.pie {
  left: 0;
  top: 37px;
}

.bars {
  left: 469px;
  top: 37px;
}

.chart-title {
  font-size: 23px;
}

.legend {
  font-size: 16px;
}

.axis {
  font-size: 11px;
}

.slant {
  font-size: 9px;
  stroke: none;
}

/* column bands */
.columns {
  color: #000;
  display: grid;
  grid-template-columns: 200px 132px 76px 112px 92px 70px 76px 103px 50px;
}

.head {
  font-size: 17px;
  font-weight: 700;
  height: 37px;
  line-height: 23px;
}

.detail {
  font-size: 16px;
  height: 42px;
  line-height: 22px;
}

.footer {
  height: 8px;
}

.cell {
  align-items: center;
  background:
    linear-gradient(#36699b 0 0) right top / 2px 6px no-repeat,
    linear-gradient(#36699b 0 0) right bottom / 2px 6px no-repeat;
  border-right: 1px solid #4a5a6c;
  display: flex;
  height: 100%;
  justify-content: center;
  min-width: 0;
  overflow: hidden;
  padding-top: 2px;
  position: relative;
  text-align: center;
  white-space: pre;
}

.cell.tall {
  align-items: flex-start;
}

.cell:first-child {
  border-left: 1px solid #84858f;
}

.cell.left {
  justify-content: flex-start;
  padding-left: 5px;
}

.cell.right {
  justify-content: flex-end;
  padding-right: 6px;
  text-align: right;
}

/* scroll bars */
.scroll-v,
.scroll-h {
  background: #eeedf2;
  display: flex;
}

.scroll-v {
  flex-direction: column;
  grid-column: 5;
  grid-row: 3;
}

.scroll-h {
  grid-column: 3;
  grid-row: 5;
}

.scroll-v path,
.scroll-h path {
  fill: none;
  stroke: #222;
  stroke-width: 2;
}

.scroll-v .thumb path,
.scroll-h .thumb path {
  stroke-width: 1;
}

.scroll-v button,
.scroll-h button {
  border: 1px solid #cbcbdc;
  flex: none;
  height: 15px;
  width: 15px;
}

.scroll-h button {
  height: 14px;
}

.thumb {
  align-items: center;
  border: 1px solid #cbcbdc;
  display: flex;
  justify-content: center;
}

.scroll-v .thumb {
  height: 29%;
  margin: 7px 0 auto;
}

.scroll-h .thumb {
  margin-right: auto;
  width: 34%;
}

.errors-bar {
  display: flex;
  flex: none;
  height: 26px;
  padding: 2px 0;
}

.errors {
  border: 1px solid #84869b;
  height: 23px;
  width: 48px;
}

/* status bar */
.status {
  align-items: center;
  background: #008cec;
  color: #fff;
  display: flex;
  flex: none;
  gap: 4px;
  height: 20px;
  padding-top: 1px;
}

.status-left {
  flex: 1;
}

.status button {
  margin-left: 8px;
}

.status input + button {
  margin-left: 0;
}

.status input {
  appearance: none;
  background: linear-gradient(#fff 0 0) no-repeat center / 100% 1px;
  height: 14px;
  margin: 0;
  width: 105px;
}

.status input::-webkit-slider-thumb {
  appearance: none;
  background: #fff;
  height: 12px;
  width: 5px;
}

.percent {
  margin-left: 2px;
  width: 22px;
}

.edge {
  background: #a9c4e0;
  border-top: 1px solid #000;
  flex: none;
  height: 3px;
}
</style>
